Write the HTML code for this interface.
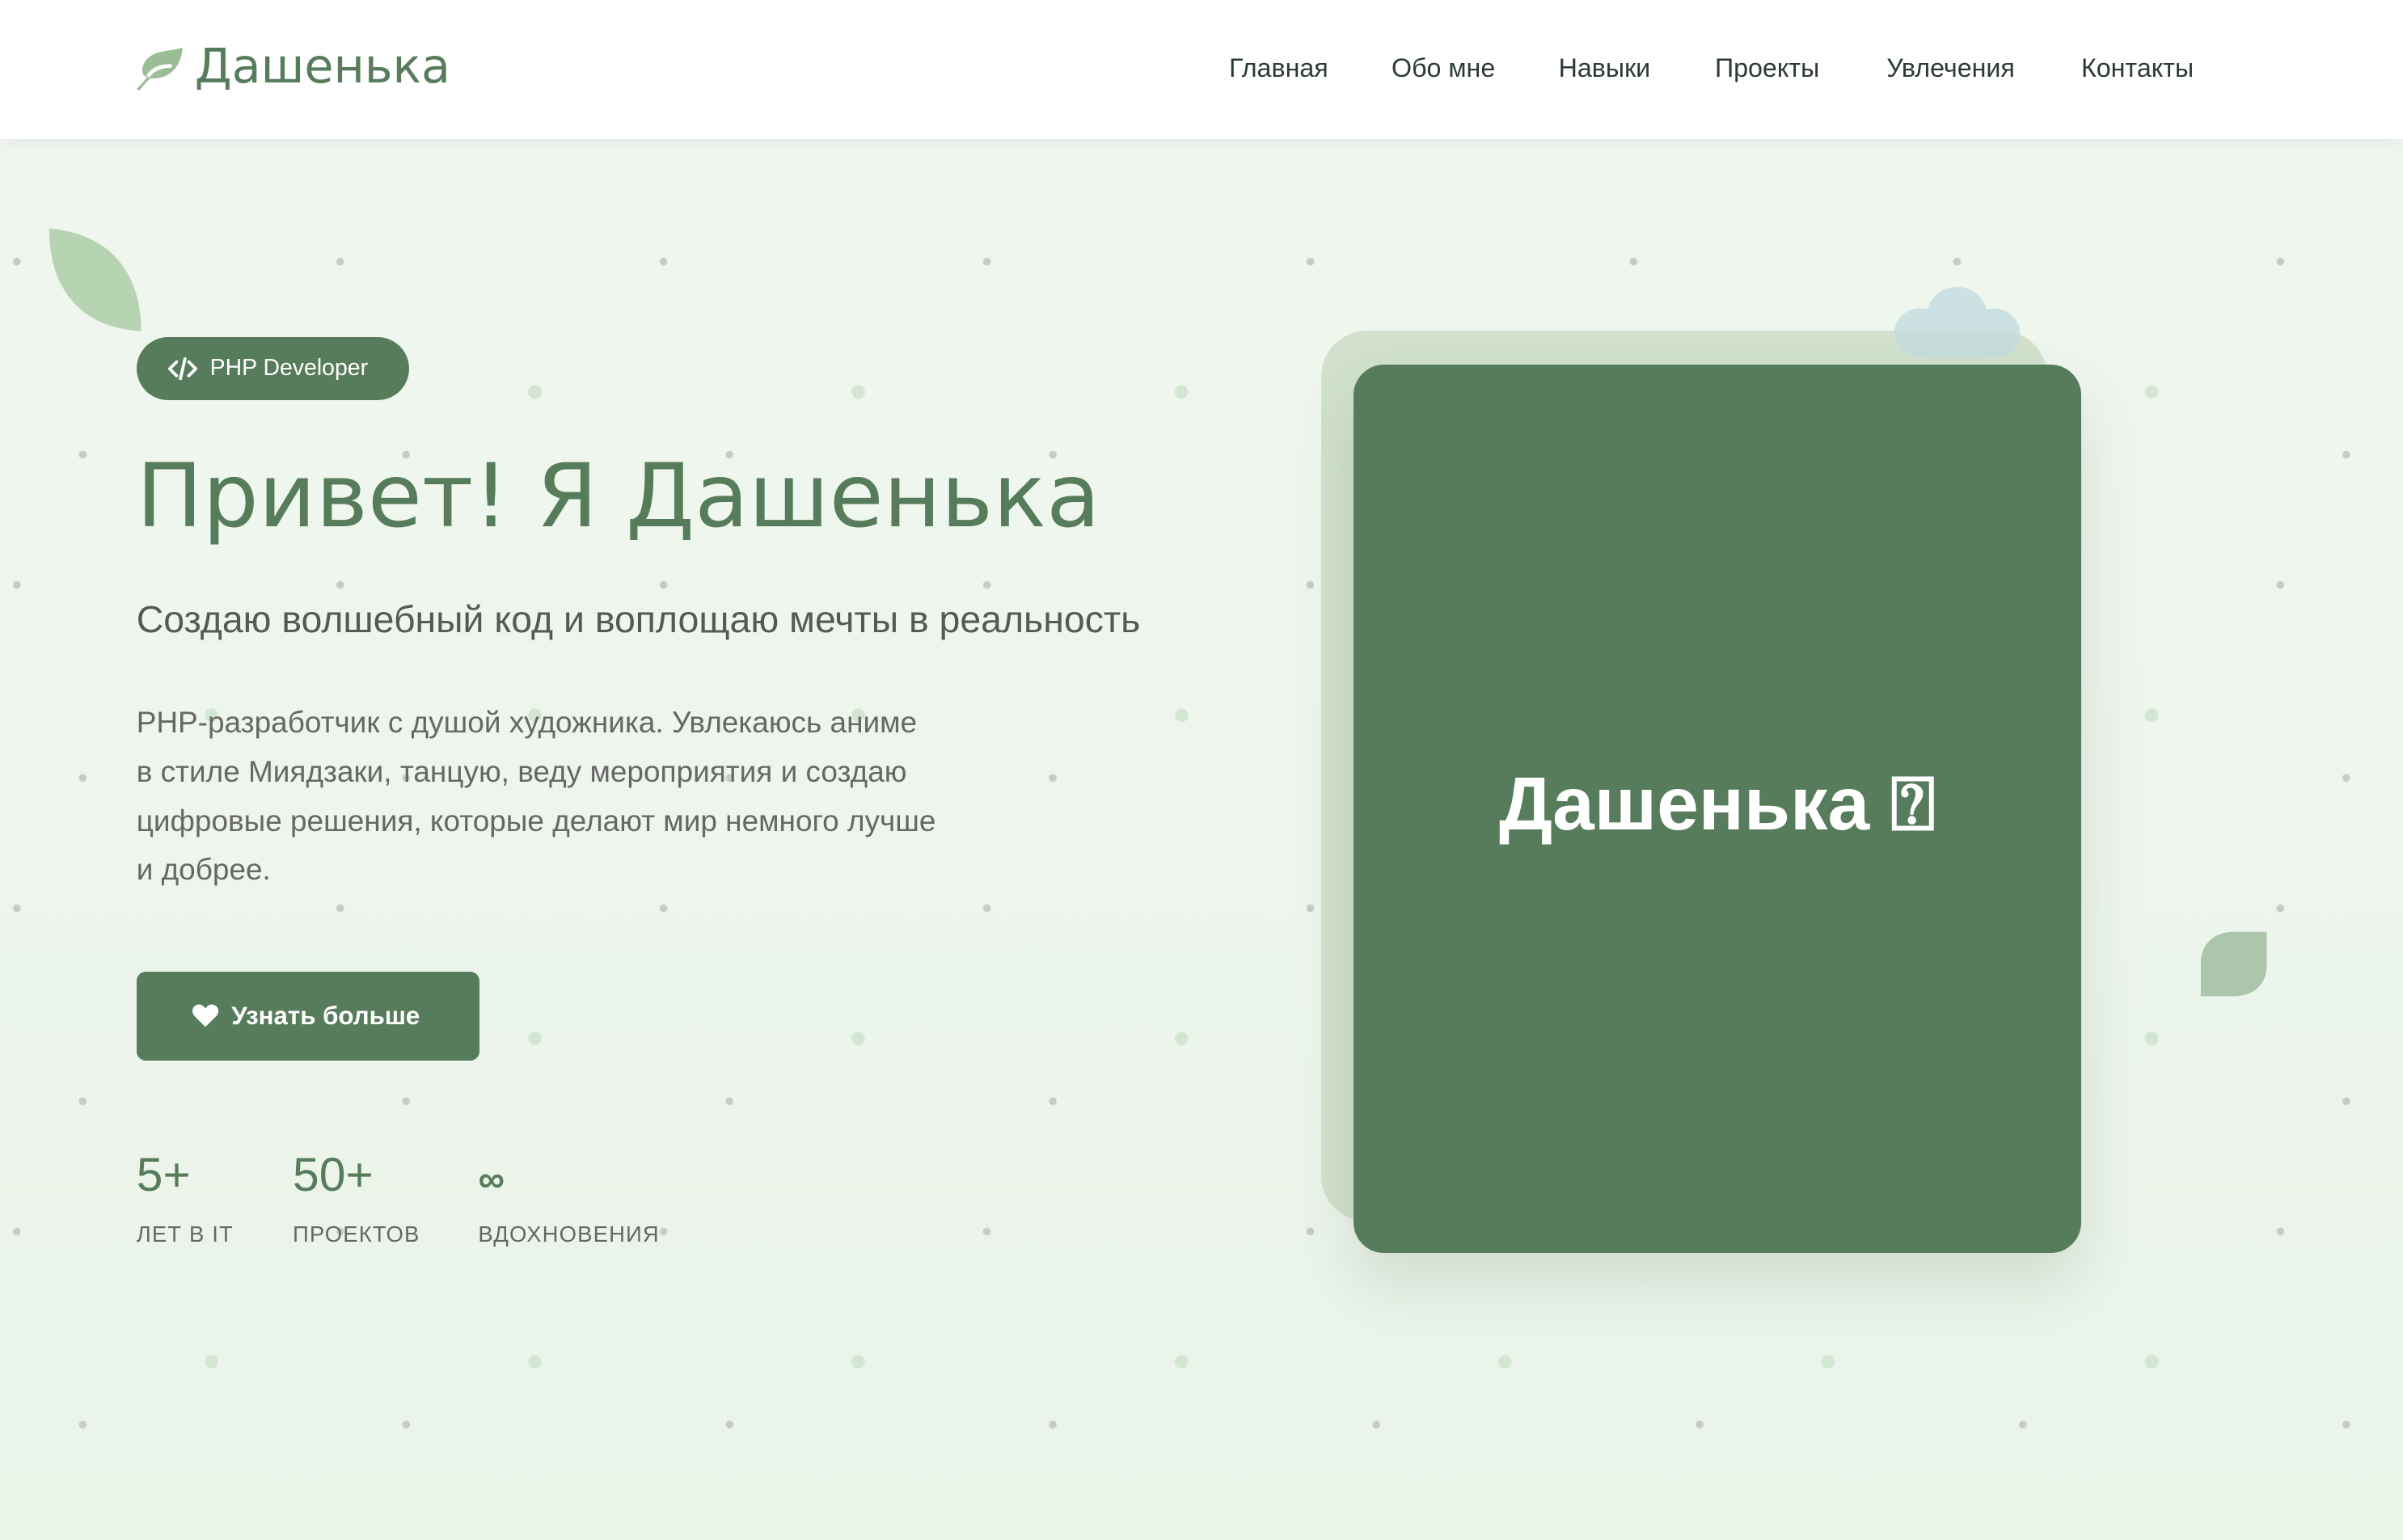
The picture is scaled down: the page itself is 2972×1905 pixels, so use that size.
<!DOCTYPE html>
<html><head><meta charset="utf-8">
<style>
html,body{margin:0;padding:0}
body{width:1568px;height:1004.5px;zoom:1.8954;overflow:hidden;font-family:"Liberation Sans","DejaVu Sans",sans-serif;position:relative;
background:#edf5ec;}
.hero{position:absolute;left:0;top:91px;width:1568px;height:914px;
background-image:
radial-gradient(circle at 11px 80px,#c5ccc5 2.2px,transparent 2.8px),
radial-gradient(circle at 54px 206px,#c5ccc5 2.2px,transparent 2.8px),
radial-gradient(circle at 138px 165px,#d3e6d1 4px,transparent 4.8px),
linear-gradient(180deg,#f0f6ef,#eaf4e9);
background-size:211px 211px,211px 211px,211px 211px,100% 100%;
background-repeat:repeat,repeat,repeat,no-repeat;}
header{position:absolute;left:0;top:0;width:1568px;height:91px;background:#fff;box-shadow:0 2px 12px rgba(0,0,0,.05);z-index:5}
.logo{position:absolute;left:127px;top:25px;font-size:31px;color:#567c5b;letter-spacing:0px;font-family:"DejaVu Sans","Liberation Sans",sans-serif;font-weight:normal}
nav a{position:absolute;top:35px;font-size:17px;color:#2d3a33;text-decoration:none;font-weight:500}
.abs{position:absolute}
.badge{left:89px;top:220px;width:178px;height:41px;border-radius:21px;background:#567c5b;color:#fff;font-size:15px;line-height:41px;box-sizing:border-box;padding-left:48px}
h1{position:absolute;left:89px;top:290px;margin:0;font-size:57.5px;font-weight:normal;color:#567c5b;font-family:"DejaVu Sans","Liberation Sans",sans-serif;letter-spacing:0}
.sub{left:89px;top:390px;font-size:24.5px;color:#585858}
.p{left:89px;top:456px;font-size:19.5px;line-height:32px;color:#676767;width:524px}
.btn{left:89px;top:634px;width:224px;height:58px;border-radius:6px;background:#567c5b;color:#fff;font-weight:bold;font-size:16.5px;line-height:58px;box-sizing:border-box;padding-left:62px}
.num{top:749px;font-size:31px;color:#567c5b}
.lab{top:797px;font-size:14.5px;color:#666;letter-spacing:.6px}
.back{left:862px;top:216px;width:474px;height:581px;border-radius:30px;background:#d1e1cd}
.card{left:883px;top:238px;width:475px;height:580px;border-radius:20px;background:#567c5b;box-shadow:0 20px 40px rgba(60,90,60,.15);color:#fff;font-size:49px;font-weight:bold;text-align:center;line-height:574px;font-family:"Liberation Sans","Noto Sans CJK SC",sans-serif}
</style></head><body>
<div class="hero"></div>
<header>
<svg class="abs" style="left:88px;top:30px" width="32" height="30" viewBox="0 0 32 30"><path d="M31 1 C22 4 8 2 5 14 C4 18 6 20 8 20 C6 23 3 26 1 28 L3 29 C5 26 7 24 10 21 C20 22 30 16 31 1 Z" fill="#9bbd96"/><path d="M9 19 C12 15 17 13 23 13" stroke="#fff" stroke-width="2.5" fill="none" stroke-linecap="round"/></svg>
<div class="logo">Дашенька</div>
<nav><a style="left:802px">Главная</a><a style="left:908px">Обо мне</a><a style="left:1017px">Навыки</a><a style="left:1119px">Проекты</a><a style="left:1231px">Увлечения</a><a style="left:1358px">Контакты</a></nav>
</header>
<svg class="abs" style="left:30px;top:146px" width="64" height="72" viewBox="0 0 64 72"><path d="M2 3 C40 6 62 30 62 70 C25 68 2 45 2 3 Z" fill="#b7d4b2"/></svg>
<svg class="abs" style="left:1435px;top:606px" width="46" height="46" viewBox="0 0 46 46"><path d="M44 2 L44 24 C44 36 36 44 22 44 L1 44 L1 22 C1 10 10 2 22 2 Z" fill="#abc6aa"/></svg>
<div class="abs badge"><svg class="abs" style="left:20px;top:13px" width="20" height="15" viewBox="0 0 20 15"><path d="M6 3 L1.5 7.5 L6 12 M14 3 L18.5 7.5 L14 12 M11.5 1 L8.5 14" stroke="#fff" stroke-width="2" fill="none" stroke-linecap="round" stroke-linejoin="round"/></svg>PHP Developer</div>
<h1>Привет! Я Дашенька</h1>
<div class="abs sub">Создаю волшебный код и воплощаю мечты в реальность</div>
<div class="abs p">PHP-разработчик с душой художника. Увлекаюсь аниме в&nbsp;стиле Миядзаки, танцую, веду мероприятия и создаю цифровые решения, которые делают мир немного лучше и&nbsp;добрее.</div>
<div class="abs btn"><svg class="abs" style="left:36px;top:21px" width="18" height="16" viewBox="0 0 18 16"><path d="M9 15.5 L2 8.5 C0 6.5 0 3 2.5 1.5 C5 0 7.5 1 9 3.5 C10.5 1 13 0 15.5 1.5 C18 3 18 6.5 16 8.5 Z" fill="#fff"/></svg>Узнать больше</div>
<div class="abs num" style="left:89px">5+</div>
<div class="abs num" style="left:191px">50+</div>
<div class="abs num" style="left:312px;top:756px;font-size:24px;font-weight:bold;font-style:italic">∞</div>
<div class="abs lab" style="left:89px">ЛЕТ В IT</div>
<div class="abs lab" style="left:191px">ПРОЕКТОВ</div>
<div class="abs lab" style="left:312px">ВДОХНОВЕНИЯ</div>
<div class="abs back"></div>
<svg class="abs" style="left:1233px;top:185px" width="88" height="50" viewBox="0 0 88 50"><g fill="#c4dde0" opacity=".8"><ellipse cx="44" cy="22" rx="20" ry="20"/><ellipse cx="20" cy="32" rx="17" ry="16"/><ellipse cx="68" cy="32" rx="17" ry="16"/><rect x="20" y="25" width="48" height="23" rx="4"/></g></svg>
<div class="abs card">Дашенька ⍰</div>
</body></html>
